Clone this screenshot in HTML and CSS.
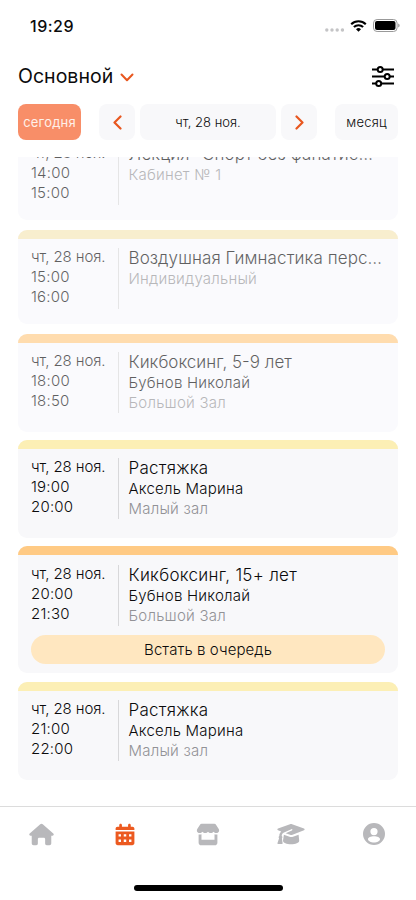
FILE: index.html
```
<!DOCTYPE html>
<html lang="ru">
<head>
<meta charset="utf-8">
<meta name="viewport" content="width=device-width, initial-scale=1">
<title>Расписание</title>
<link rel="stylesheet" href="styles.css">
</head>
<body>
<div class="screen">
  <div class="status">
    <span class="clock">19:29</span>
    <div class="status-icons">
      <svg class="dots" width="19" height="4" viewBox="0 0 19 4" fill="#c4c4c6"><circle cx="1.8" cy="2" r="1.7"/><circle cx="7" cy="2" r="1.7"/><circle cx="12.2" cy="2" r="1.7"/><circle cx="17.4" cy="2" r="1.7"/></svg>
      <svg class="wifi" width="17" height="12" viewBox="0 0 17 12"><path d="M1.2 4.2a10.4 10.4 0 0 1 14.6 0M3.9 7.1a6.5 6.5 0 0 1 9.2 0" fill="none" stroke="#000" stroke-width="2.1"/><path d="M8.5 11.7 6 9.2a3.6 3.6 0 0 1 5 0z"/></svg>
      <svg class="battery" width="27" height="13" viewBox="0 0 27 13"><rect x=".5" y=".5" width="23.6" height="12" rx="3.6" fill="#fff" stroke="#999"/><rect x="2" y="2" width="20.5" height="9" rx="2"/><path d="M25.3 4.5v4c1.7-.7 1.7-3.3 0-4z" fill="#888"/></svg>
    </div>
  </div>

  <header class="header">
    <button class="branch">Основной
      <svg width="14" height="9" viewBox="0 0 14 9"><path d="m1.500 1.500 5.500 5.700 5.500-5.700" fill="none" stroke="#e8571f" stroke-width="2" stroke-linecap="round" stroke-linejoin="round"/></svg>
    </button>
    <svg class="filters" width="22" height="21" viewBox="0 0 22 21" fill="none" stroke="#000" stroke-width="2"><path d="M0 3.500h5.500M11 3.500h11M0 10.500h12.500M18 10.500h4M0 17.500h4M9.500 17.500h12.500"/><circle cx="8.200" cy="3.500" r="2.500"/><circle cx="15.200" cy="10.500" r="2.500"/><circle cx="6.700" cy="17.500" r="2.500"/></svg>
  </header>

  <nav class="dates">
    <button class="pill today">сегодня</button>
    <button class="pill arrow prev"><svg width="9" height="15" viewBox="0 0 9 15"><path d="M7.500 1.500 1.500 7.500l6 6" /></svg></button>
    <button class="pill day">чт, 28 ноя.</button>
    <button class="pill arrow"><svg width="9" height="15" viewBox="0 0 9 15"><path d="m1.500 1.500 6 6-6 6"/></svg></button>
    <button class="pill month">месяц</button>
  </nav>

  <main class="list">
    <article class="card past short scrolled">
      <div class="bar cream"></div>
      <div class="row">
        <div class="time"><span class="date">чт, 28 ноя.</span><br>14:00<br>15:00</div>
        <div class="rule"></div>
        <div class="info"><h2>Лекция "Спорт без фанатис…</h2><p class="room">Кабинет № 1</p></div>
      </div>
    </article>
    <article class="card past short">
      <div class="bar cream"></div>
      <div class="row">
        <div class="time"><span class="date">чт, 28 ноя.</span><br>15:00<br>16:00</div>
        <div class="rule"></div>
        <div class="info"><h2>Воздушная Гимнастика перс…</h2><p class="room">Индивидуальный</p></div>
      </div>
    </article>
    <article class="card past">
      <div class="bar orange"></div>
      <div class="row">
        <div class="time"><span class="date">чт, 28 ноя.</span><br>18:00<br>18:50</div>
        <div class="rule"></div>
        <div class="info"><h2 class="kids">Кикбоксинг, 5-9 лет</h2><p>Бубнов Николай</p><p class="room">Большой Зал</p></div>
      </div>
    </article>
    <article class="card">
      <div class="bar yellow"></div>
      <div class="row">
        <div class="time"><span class="date">чт, 28 ноя.</span><br>19:00<br>20:00</div>
        <div class="rule"></div>
        <div class="info"><h2 class="wide">Растяжка</h2><p>Аксель Марина</p><p class="room">Малый зал</p></div>
      </div>
    </article>
    <article class="card queue">
      <div class="bar orange"></div>
      <div class="row">
        <div class="time"><span class="date">чт, 28 ноя.</span><br>20:00<br>21:30</div>
        <div class="rule"></div>
        <div class="info"><h2 class="wide">Кикбоксинг, 15+ лет</h2><p>Бубнов Николай</p><p class="room">Большой Зал</p></div>
      </div>
      <button class="join">Встать в очередь</button>
    </article>
    <article class="card">
      <div class="bar yellow"></div>
      <div class="row">
        <div class="time"><span class="date">чт, 28 ноя.</span><br>21:00<br>22:00</div>
        <div class="rule"></div>
        <div class="info"><h2 class="wide">Растяжка</h2><p>Аксель Марина</p><p class="room">Малый зал</p></div>
      </div>
    </article>
  </main>

  <footer class="tabs">
    <div class="tab"><svg width="25" height="23" viewBox="0 0 26 24"><path d="M13 .8c.5 0 .9.2 1.300.5l11 9.700c.9.900.4 2.200-.8 2.200h-1.300v8c0 1.200-.8 2-2 2h-2.700c-1 0-1.700-.7-1.700-1.700v-4.700c0-.8-.6-1.400-1.400-1.400h-4.800c-.8 0-1.400.6-1.400 1.400v4.700c0 1-.7 1.700-1.700 1.700H4.800c-1.200 0-2-.8-2-2v-8H1.500C.3 13.200-.2 11.900.7 11l11-9.700c.4-.3.800-.5 1.300-.5z"/></svg></div>
    <div class="tab active"><svg width="20" height="23" viewBox="0 0 20 24"><path fill-rule="evenodd" d="M5.400.7c.8 0 1.400.6 1.400 1.400v1.700h6.400V2.100c0-.8.6-1.400 1.400-1.400s1.400.6 1.400 1.400v1.700h1.800c1.200 0 2 .8 2 2v1.500H.2V5.800c0-1.200.8-2 2-2H4V2.100C4 1.300 4.600.7 5.400.7zM.2 8.900h19.600v12c0 1.400-1 2.300-2.300 2.300h-15C1.200 23.200.2 22.300.2 20.900zM3.300 11.700v2.500h2.500v-2.500zm5.400 0v2.500h2.600v-2.500zm5.500 0v2.500h2.500v-2.500zM3.300 17.200v2.500h2.500v-2.500zm5.400 0v2.500h2.600v-2.500zm5.500 0v2.500h2.500v-2.500z"/></svg></div>
    <div class="tab"><svg width="24" height="23" viewBox="0 0 24 24"><path d="M5.500.9h13c.9 0 1.600.4 2 1.100l2.700 4.300c1.100 2.200-.1 4.200-2.500 4.200-1.200 0-2.200-.5-2.900-1.400-.7.900-1.700 1.400-2.900 1.400s-2.200-.5-2.900-1.400c-.7.900-1.700 1.400-2.900 1.400s-2.200-.5-2.900-1.400c-.7.900-1.700 1.400-2.900 1.400C.9 10.500-.3 8.500.8 6.300L3.500 2c.4-.7 1.100-1.100 2-1.100z"/><path d="M2.200 12c1 .2 2 .1 3-.3v5.700h13.600v-5.700c1 .4 2 .5 3 .3v8.500c0 1.600-1.100 2.700-2.700 2.700H4.900c-1.600 0-2.700-1.100-2.700-2.700z"/></svg></div>
    <div class="tab"><svg width="28" height="22" viewBox="0 0 28 22"><path d="M13 1.200c.7-.3 1.400-.3 2.100 0l11.900 4.400c.9.400.9 1.300 0 1.700L15.500 11.800c-.8.300-1.700.3-2.500 0l-4.300-1.600 6.200-2.800c.9-.4.5-1.600-.5-1.200L7 9.500c-1.300.7-2.200 1.800-2.300 3.400.9.600.9 1.700.2 2.300l.7 4.900c.1.600-.3 1-.9 1H1.300c-.6 0-1-.4-.8-1l1.600-4.900c-.7-.7-.6-1.800.2-2.300 0-1.800.7-3.300 1.900-4.400L1 7.300c-.9-.4-.9-1.300 0-1.700z"/><path d="m6.900 11.800 5.600 2c1.200.4 2.400.4 3.500 0l5.600-2 .6 5.900c0 2-3.700 3.500-8.100 3.500S6 19.700 6 17.700z"/></svg></div>
    <div class="tab"><svg width="22" height="22" viewBox="0 0 22 22"><path fill-rule="evenodd" d="M11 0a11 11 0 1 1 0 22 11 11 0 0 1 0-22zm0 5a3.600 3.600 0 1 0 0 7.200A3.600 3.600 0 0 0 11 5zm0 8.300c-3.200 0-6 1.200-6 2.900s2.800 3.200 6 3.200 6-1.500 6-3.200-2.800-2.900-6-2.900z"/></svg></div>
  </footer>
  <div class="home-indicator"></div>
</div>
</body>
</html>
```
FILE: styles.css
```
* { box-sizing: border-box; }
body { margin: 0; background: #fff; font-family: Inter, "Liberation Sans", sans-serif; color: #0b0b0c; }
button { font: inherit; color: inherit; border: 0; padding: 0; background: none; }
h2, p { margin: 0; font-weight: inherit; }
svg { display: block; flex: none; }

.screen { width: 416px; height: 900px; display: flex; flex-direction: column; overflow: hidden; }

.status { height: 51px; padding: 0 16px 0 30px; display: flex; align-items: center; justify-content: space-between; }
.clock { font-size: 16px; font-weight: 500; line-height: 20px; letter-spacing: .5px; }
.status-icons { display: flex; align-items: center; }
.dots { margin: 8px 6px 0 0; }
.wifi { margin-right: 6px; }

.header { height: 49px; padding: 0 22px 0 18px; display: flex; align-items: center; justify-content: space-between; }
.branch { display: flex; align-items: center; gap: 7px; font-size: 19.5px; line-height: 24px; letter-spacing: .02px; }
.branch svg { margin-top: 4px; }
.filters { margin-top: 2px; }

.dates { height: 57px; padding: 4px 18px 0; display: flex; align-items: flex-start; }
.pill { height: 36px; border-radius: 8px; background: #f8f8fa; font-size: 13px; letter-spacing: .2px; display: flex; align-items: center; justify-content: center; }
.today { width: 63px; margin-right: 18px; background: #f88e68; color: #fff0e9; }
.arrow { width: 36px; margin-right: 5px; }
.arrow path { fill: none; stroke: #e8571f; stroke-width: 2.2; stroke-linecap: round; stroke-linejoin: round; }
.day { width: 136px; margin-right: 5px; font-weight: 300; letter-spacing: 0; }
.month { width: 63px; margin-left: 13px; font-weight: 300; }

.list { height: 649px; padding: 0 18px; overflow: hidden; display: flex; flex-direction: column; gap: 8px; }
.card { flex: none; height: 98px; border-radius: 9px; background: #f8f8fa; overflow: hidden; }
.past { opacity: .65; background: #f8f8fc; }
.short { height: 94px; margin-bottom: 2px; }
.scrolled { margin-top: -31px; }
.queue { height: 127px; margin-bottom: 1px; }
.bar { height: 9px; }
.cream { background: #f5e5b5; }
.orange { background: #ffca84; }
.yellow { background: #fcefb5; }
.row { padding: 8px 13px 0; display: flex; }
.queue .row { padding-top: 9px; }
.time { width: 87px; font-size: 15px; font-weight: 300; line-height: 20px; letter-spacing: .22px; white-space: nowrap; }
.date { letter-spacing: -.08px; }
.rule { width: 1px; height: 61px; margin-top: 1px; background: #d8d8da; }
.info { flex: 1; min-width: 0; padding-left: 9.5px; font-size: 15px; line-height: 20px; font-weight: 300; letter-spacing: .22px; }
.info h2 { font-size: 17px; line-height: 22px; letter-spacing: .09px; white-space: nowrap; }
.info .kids { letter-spacing: 0; }
.info .wide { letter-spacing: .28px; }
.room { color: #929296; }
.join { display: block; width: 354px; height: 29px; margin: 9px 13px 0; border-radius: 15px; background: #ffe7c0; font-size: 15px; font-weight: 300; line-height: 27px; letter-spacing: .1px; text-align: center; }

.tabs { height: 68px; border-top: 1px solid #dcdcdc; display: flex; }
.tab { flex: 1; padding-top: 16px; display: flex; justify-content: center; align-items: flex-start; fill: #b8b8bb; }
.active { fill: #ec5a20; }
.home-indicator { width: 149px; height: 6px; margin: 11px auto 0; border-radius: 3px; background: #000; }
```
